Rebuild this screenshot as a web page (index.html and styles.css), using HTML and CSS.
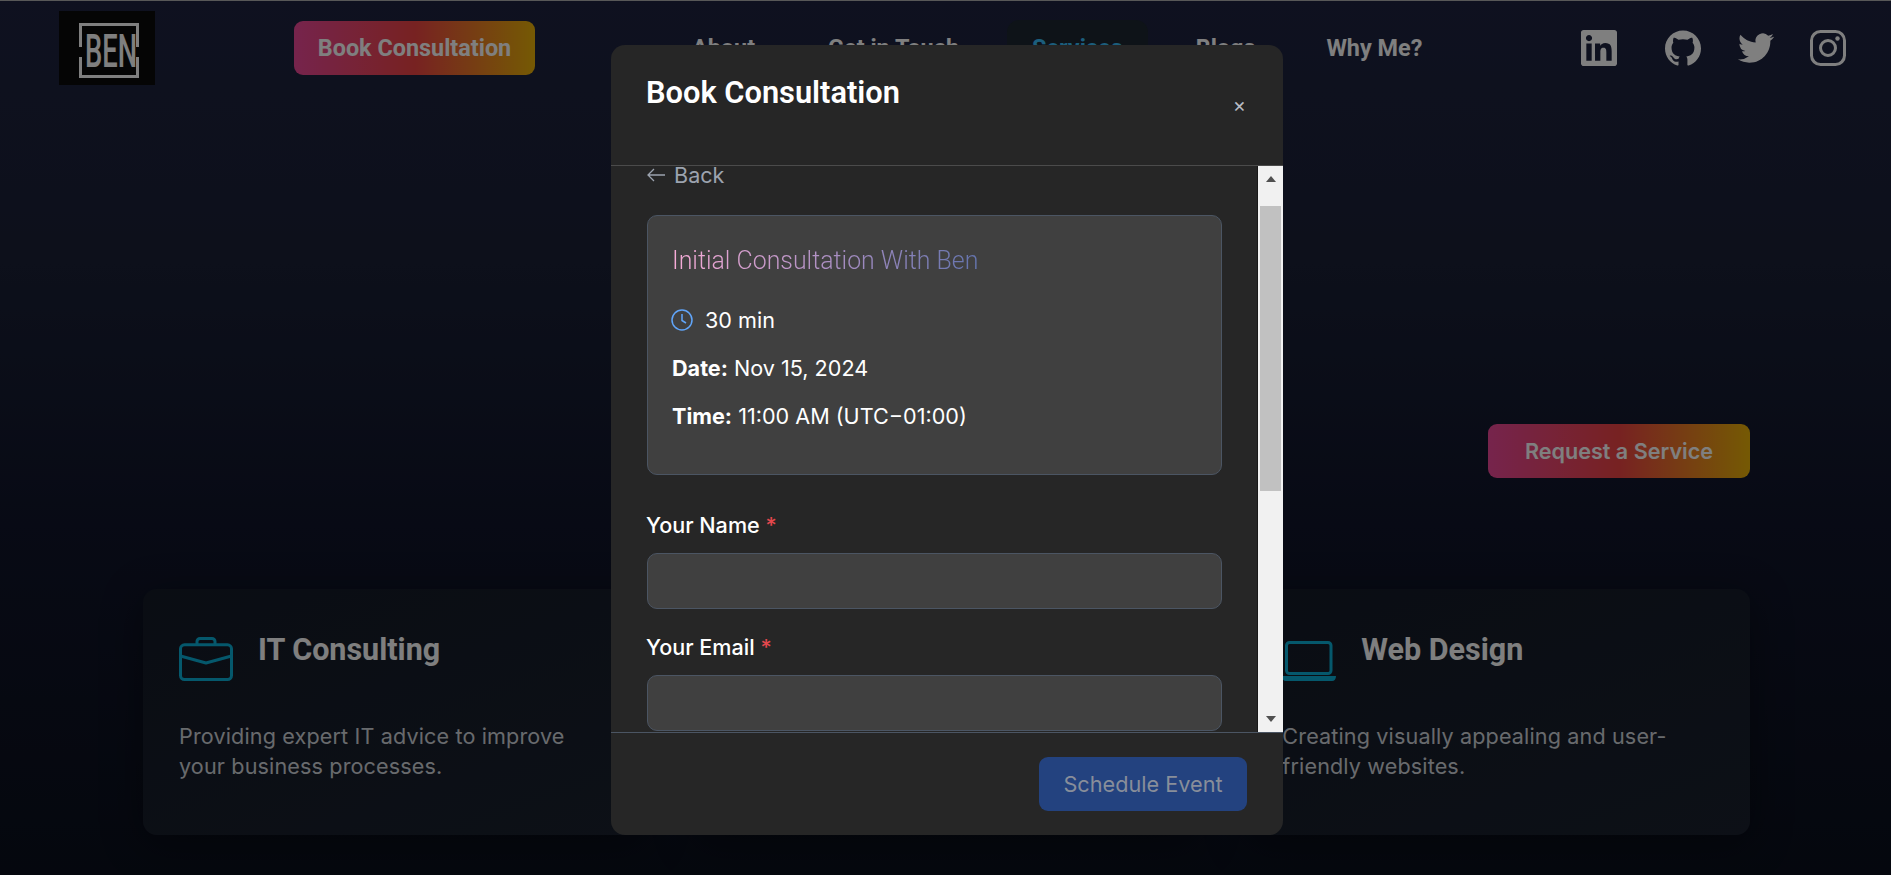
FILE: index.html
```html
<!DOCTYPE html>
<html lang="en">
<head>
<meta charset="utf-8">
<title>Ben - Services</title>
<link rel="stylesheet" href="styles.css">
</head>
<body>
<div class="page">
  <header class="topbar">
    <a class="logo" href="#">
      <svg class="logo-svg" viewBox="0 0 96 74">
        <path class="logo-frame" d="M21.500 36V13.500H78.500V36M21.500 46V65.500H78.500V46"/>
        <text class="logo-text" transform="translate(26 56) scale(.91 1.53)">BEN</text>
      </svg>
    </a>
    <a class="grad-btn book-btn" href="#">Book Consultation</a>
    <nav class="nav">
      <a class="nav-link" href="#">About</a>
      <a class="nav-link" href="#">Get in Touch</a>
      <a class="nav-link nav-active" href="#">Services</a>
      <a class="nav-link" href="#">Blogs</a>
      <a class="nav-link nav-last" href="#">Why Me?</a>
    </nav>
    <div class="socials">
      <svg class="social social-first" viewBox="0 0 24 24"><path d="M20.447 20.452h-3.554v-5.569c0-1.328-.027-3.037-1.852-3.037-1.853 0-2.136 1.445-2.136 2.939v5.667H9.351V9h3.414v1.561h.046c.477-.9 1.637-1.85 3.37-1.85 3.601 0 4.267 2.37 4.267 5.455v6.286zM5.337 7.433c-1.144 0-2.063-.926-2.063-2.065 0-1.138.92-2.063 2.063-2.063 1.14 0 2.064.925 2.064 2.063 0 1.139-.925 2.065-2.064 2.065zm1.782 13.019H3.555V9h3.564v11.452zM22.225 0H1.771C.792 0 0 .774 0 1.729v20.542C0 23.227.792 24 1.771 24h20.451C23.2 24 24 23.227 24 22.271V1.729C24 .774 23.2 0 22.222 0h.003z"/></svg>
      <svg class="social" viewBox="0 0 24 24"><path d="M12 .297c-6.63 0-12 5.373-12 12 0 5.303 3.438 9.8 8.205 11.385.6.113.82-.258.82-.577 0-.285-.01-1.04-.015-2.04-3.338.724-4.042-1.61-4.042-1.61C4.422 18.07 3.633 17.7 3.633 17.7c-1.087-.744.084-.729.084-.729 1.205.084 1.838 1.236 1.838 1.236 1.07 1.835 2.809 1.305 3.495.998.108-.776.417-1.305.76-1.605-2.665-.3-5.466-1.332-5.466-5.93 0-1.31.465-2.38 1.235-3.22-.135-.303-.54-1.523.105-3.176 0 0 1.005-.322 3.3 1.23.96-.267 1.98-.399 3-.405 1.02.006 2.04.138 3 .405 2.28-1.552 3.285-1.23 3.285-1.23.645 1.653.24 2.873.12 3.176.765.84 1.23 1.91 1.23 3.22 0 4.61-2.805 5.625-5.475 5.92.42.36.81 1.096.81 2.22 0 1.606-.015 2.896-.015 3.286 0 .315.21.69.825.57C20.565 22.092 24 17.592 24 12.297c0-6.627-5.373-12-12-12"/></svg>
      <svg class="social" viewBox="0 0 24 24"><path d="M23.953 4.57a10 10 0 01-2.825.775 4.958 4.958 0 002.163-2.723c-.951.555-2.005.959-3.127 1.184a4.92 4.92 0 00-8.384 4.482C7.69 8.095 4.067 6.13 1.64 3.162a4.822 4.822 0 00-.666 2.475c0 1.71.87 3.213 2.188 4.096a4.904 4.904 0 01-2.228-.616v.06a4.923 4.923 0 003.946 4.827 4.996 4.996 0 01-2.212.085 4.936 4.936 0 004.604 3.417 9.867 9.867 0 01-6.102 2.105c-.39 0-.779-.023-1.17-.067a13.995 13.995 0 007.557 2.209c9.053 0 13.998-7.496 13.998-13.985 0-.21 0-.42-.015-.63A9.935 9.935 0 0024 4.59z"/></svg>
      <svg class="social social-line" viewBox="0 0 36 36"><rect x="1.500" y="1.500" width="33" height="33" rx="9"/><circle cx="18" cy="18" r="7.500"/><circle class="ig-dot" cx="27.500" cy="8.500" r="2.200"/></svg>
    </div>
  </header>

  <main class="main">
    <a class="grad-btn request-btn" href="#">Request a Service</a>
    <section class="cards">
      <article class="card">
        <div class="card-head">
          <svg class="card-icon" viewBox="0 0 54 44"><rect x="1.500" y="7.800" width="51" height="34.700" rx="4"/><path d="M18 7.500V4.500a3 3 0 0 1 3-3h12a3 3 0 0 1 3 3v3M1.500 19 27 26 52.500 19"/></svg>
          <h3 class="card-title">IT Consulting</h3>
        </div>
        <p class="card-text">Providing expert IT advice to improve your business processes.</p>
      </article>
      <article class="card"></article>
      <article class="card">
        <div class="card-head">
          <svg class="card-icon" viewBox="0 0 54 44"><rect x="4.500" y="5.500" width="44.500" height="31" rx="3"/><path class="card-icon-fill" d="M0 39h54c0 3-1.500 5-4 5H4c-2.500 0-4-2-4-5z"/></svg>
          <h3 class="card-title">Web Design</h3>
        </div>
        <p class="card-text">Creating visually appealing and user-friendly websites.</p>
      </article>
    </section>
  </main>
</div>

<div class="overlay">
  <div class="modal">
    <div class="modal-head">
      <h2 class="modal-title">Book Consultation</h2>
      <span class="modal-close">×</span>
    </div>
    <div class="modal-body">
      <div class="modal-scroll">
        <div class="back">
          <svg class="back-arrow" viewBox="0 0 18 14"><path d="M18 7H1M7 1 1 7l6 6"/></svg>
          <span class="back-label">Back</span>
        </div>
        <div class="summary">
          <h4 class="summary-title">Initial Consultation With Ben</h4>
          <div class="summary-row">
            <svg class="clock" viewBox="0 0 22 22"><circle cx="11" cy="11" r="10"/><path d="M11 5v6.500l4 2.500"/></svg>
            <span>30 min</span>
          </div>
          <div class="summary-row"><span><b>Date:</b> Nov 15, 2024</span></div>
          <div class="summary-row"><span><b>Time:</b> 11:00 AM (UTC−01:00)</span></div>
        </div>
        <label class="field-label">Your Name <span class="req">*</span></label>
        <div class="field-input"></div>
        <label class="field-label">Your Email <span class="req">*</span></label>
        <div class="field-input"></div>
      </div>
      <div class="scrollbar">
        <span class="arrow-up"></span>
        <span class="thumb"></span>
        <span class="arrow-down"></span>
      </div>
    </div>
    <div class="modal-foot">
      <button class="schedule-btn" type="button">Schedule Event</button>
    </div>
  </div>
</div>
</body>
</html>
```

FILE: styles.css
```css
* { box-sizing: border-box; }
html, body { margin: 0; padding: 0; height: 100%; overflow: hidden; }
body {
  font-family: Inter, "Liberation Sans", sans-serif;
  color: #fff;
  background: linear-gradient(180deg, #1e2340 0%, #1a2036 30%, #10152a 60%, #0a0f1c 100%);
  position: relative;
}
a { color: inherit; text-decoration: none; }
h2, h3, h4, p { margin: 0; }

.page { height: 875px; border-top: 1px solid #b0b0b0; display: flex; flex-direction: column; }

.topbar { height: 93px; display: flex; align-items: center; padding: 0 45px 0 59px; }
.logo { width: 96px; height: 74px; background: #0a0a0a; display: block; flex: none; }
.logo-svg { display: block; width: 96px; height: 74px; }
.logo-frame { fill: none; stroke: #fff; stroke-width: 3; }
.logo-text { font-family: Roboto, sans-serif; font-weight: 500; font-size: 30px; fill: #fff; }

.grad-btn {
  display: flex; align-items: center; justify-content: center;
  height: 54px; border-radius: 9px; color: #fff;
  background: linear-gradient(90deg, #ec4899, #ef4444 50%, #eab308);
}
.book-btn { width: 241px; margin-left: 139px; font: 700 23.4px Roboto, sans-serif; }

.nav { display: flex; gap: 23px; margin-left: 132px; font: 700 23.4px Roboto, sans-serif; }
.nav-link { height: 56px; padding: 0 25px; display: flex; align-items: center; border-radius: 12px; white-space: nowrap; }
.nav-last { margin-left: -2px; }
.nav-active { background: #1c2630; color: #38bdf8; }

.socials { display: flex; gap: 36.5px; margin-left: auto; }
.social { width: 36px; height: 36px; display: block; fill: #fff; }
.social-first { margin-right: 12px; }
.social-line { fill: none; stroke: #fff; stroke-width: 3; }
.social-line .ig-dot { fill: #fff; stroke: none; }

.main { flex: 1; display: flex; flex-direction: column; padding: 0 141px 0 143px; }
.request-btn { align-self: flex-end; width: 262px; margin-top: 330px; font: 600 21.6px Inter, sans-serif; }

.cards { margin-top: 111px; display: grid; grid-template-columns: repeat(3, 1fr); gap: 48px; }
.card {
  height: 246px; padding: 42px 36px 0; border-radius: 14px;
  background: linear-gradient(160deg, #141a27, #1a212e);
  box-shadow: 0 8px 40px rgba(0, 0, 0, .35);
}
.card-head { display: flex; gap: 25px; align-items: flex-start; }
.card-icon { width: 54px; height: 44px; flex: none; margin-top: 6px; fill: none; stroke: #0ab0d8; stroke-width: 3; stroke-linejoin: round; }
.card-icon-fill { fill: #0ab0d8; stroke: none; }
.card-title { font: 700 30.5px/36px Roboto, sans-serif; margin-top: 1px; }
.card-text { margin-top: 40px; padding-right: 24px; font: 400 21.6px/30px Inter, sans-serif; letter-spacing: .13px; color: #d1d5db; }

.overlay { position: absolute; inset: 0; background: rgba(0, 0, 0, .5); }
.modal {
  position: absolute; left: 611px; top: 45px; width: 672px; height: 790px;
  background: #262626; border-radius: 14px; display: flex; flex-direction: column; overflow: hidden;
}
.modal-head { height: 121px; flex: none; padding: 0 36px; border-bottom: 1px solid #4b4b4b; position: relative; }
.modal-title { font: 600 30.8px/36px Roboto, sans-serif; margin-top: 30px; margin-left: -1px; color: #fff; }
.modal-close { position: absolute; right: 37px; top: 47px; font: 400 20px/26px Inter, sans-serif; color: #b8bcc4; }

.modal-body { flex: 1; min-height: 0; display: flex; }
.modal-scroll { flex: 1; padding: 0 35px 0 36px; min-width: 0; border-right: 1px solid #181818; }
.back { height: 18px; display: flex; align-items: center; gap: 9px; color: #9ca3af; }
.back-label { font-size: 21.6px; line-height: 18px; }
.back-arrow { width: 18px; height: 14px; fill: none; stroke: #9ca3af; stroke-width: 1.3; }

.summary {
  margin-top: 31px; height: 260px; padding: 30px 24px 0;
  background: #404040; border: 1px solid #4b5563; border-radius: 10px;
}
.summary-title {
  display: inline-block; font: 300 24.9px/30px Roboto, sans-serif; margin-bottom: 10px;
  background: linear-gradient(90deg, #f8acd8, #6474ae);
  -webkit-background-clip: text; background-clip: text; color: transparent;
}
.summary-row { display: flex; align-items: center; gap: 12px; height: 28px; margin-top: 20px; font-size: 21.6px; line-height: 28px; color: #fff; }
.summary-row b { font-weight: 700; }
.clock { width: 22px; height: 22px; flex: none; margin-left: -1px; fill: none; stroke: #60a5fa; stroke-width: 1.5; }

.field-label { display: block; margin: 24px 0 0 -1px; font-size: 21.6px; line-height: 28px; font-weight: 500; color: #fff; }
.summary + .field-label { margin-top: 36px; }
.req { color: #e5484d; }
.field-input { height: 56px; margin-top: 14px; background: #404040; border: 1px solid #4b5563; border-radius: 10px; }

.scrollbar { width: 25px; flex: none; background: #f1f1f1; display: flex; flex-direction: column; align-items: center; }
.arrow-up { width: 0; height: 0; margin-top: 10px; border: 5.5px solid transparent; border-top: 0; border-bottom: 6px solid #505050; }
.thumb { width: 21px; height: 285px; margin-top: 24px; background: #c1c1c1; }
.arrow-down { width: 0; height: 0; margin-top: auto; margin-bottom: 10px; border: 5.5px solid transparent; border-bottom: 0; border-top: 6px solid #505050; }

.modal-foot { height: 103px; flex: none; border-top: 1px solid #4b5563; display: flex; align-items: center; justify-content: flex-end; padding: 0 36px; }
.schedule-btn {
  width: 208px; height: 54px; border: 0; border-radius: 9px;
  background: #23427f; color: #888e9a; font: 400 21.7px Inter, sans-serif;
}
```
